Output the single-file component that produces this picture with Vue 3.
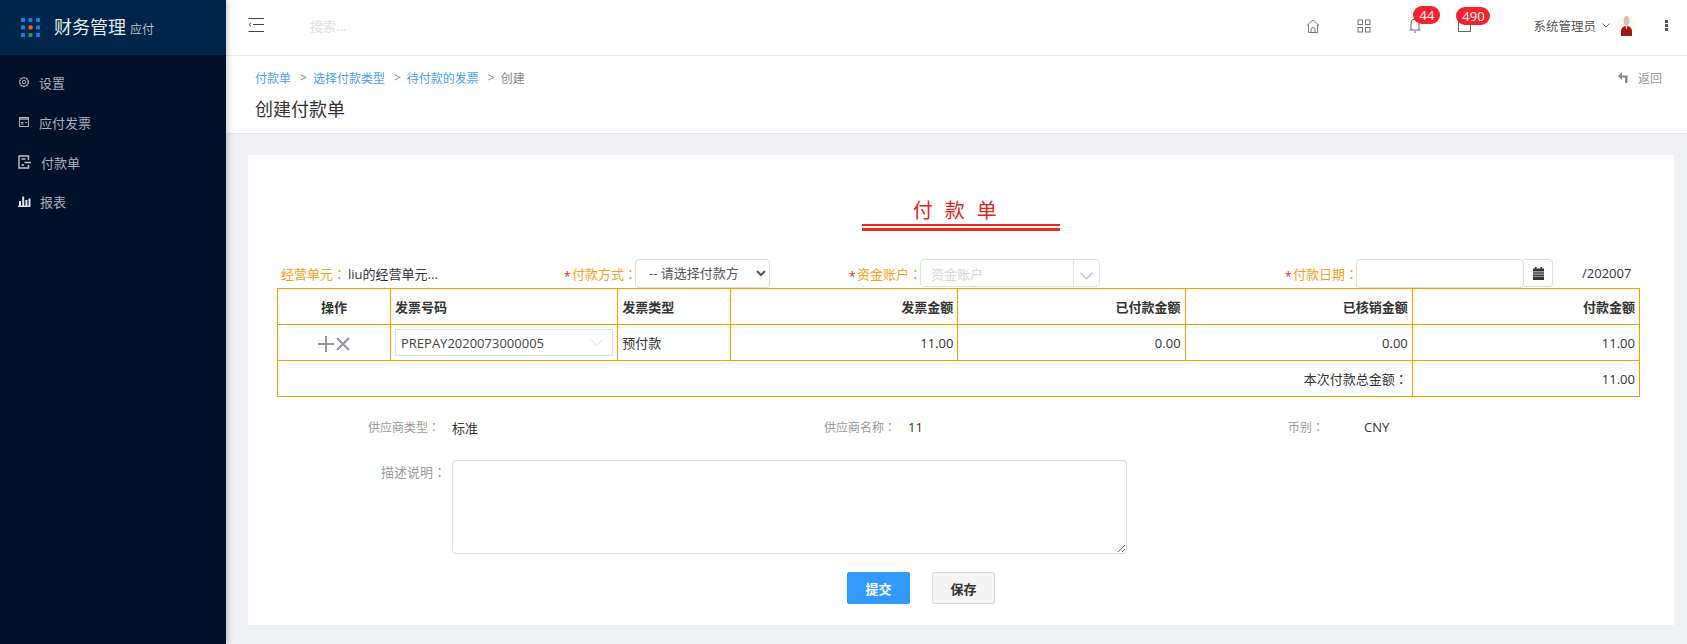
<template>
  <div class="app">
    <aside class="sidebar">
      <div class="logo">
        <svg class="logo-dots" width="19" height="19" viewBox="0 0 19 19">
          <rect v-for="d in dots" :key="d.k" :x="d.x" :y="d.y" width="4" height="4" rx="0.8" :fill="d.c" />
        </svg>
        <span class="logo-name">财务管理</span>
        <span class="logo-sub">应付</span>
      </div>
      <nav class="menu">
        <a class="menu-item">
          <svg class="menu-icon" width="12" height="12" viewBox="0 0 12 12" fill="none" stroke="#a9b0b9">
            <circle cx="6" cy="6" r="4.300" stroke-width="1.500" stroke-dasharray="2.200 .5" />
            <circle cx="6" cy="6" r="1.700" />
          </svg>
          设置
        </a>
        <a class="menu-item">
          <svg class="menu-icon" width="12" height="12" viewBox="0 0 12 12" fill="none" stroke="#a9b0b9">
            <rect x="1.500" y="1.500" width="9" height="9" />
            <path d="M1.500 3h9" stroke-width="1.500" />
            <path d="M3 6.500h2.500M7 6.500h2M3 8h2.500" />
          </svg>
          应付发票
        </a>
        <a class="menu-item pay">
          <svg class="menu-icon" width="13" height="14" viewBox="0 0 13 14" fill="none" stroke="#c0c5cc" stroke-width="1.400">
            <path d="M10.500 5V1H1v12h9.500v-3M3.500 4h4M3.500 10h2.500M6.500 7.500H13" />
          </svg>
          付款单
        </a>
        <a class="menu-item">
          <svg class="menu-icon" width="13" height="12" viewBox="0 0 13 12" fill="#dfe2e6">
            <path d="M0 10.500h12.500V12H0zM1 6h2v4.500H1zM4.200 1.500h2v9h-2zM7.400 5h2v5.500h-2zM10.500 3.500h2v7h-2z" />
          </svg>
          报表
        </a>
      </nav>
    </aside>

    <div class="main">
      <header class="navbar">
        <svg class="burger" width="16" height="14" viewBox="0 0 16 14" fill="none" stroke="#444">
          <path d="M.5.500H16M5 6.500h11M.5 13.500H16M3 4.800L1 6.500l2 1.700" />
        </svg>
        <span class="search">搜索...</span>
        <div class="nav-right">
          <svg class="nav-icon home" width="14" height="14" viewBox="0 0 14 14" fill="none" stroke="#777">
            <path d="M.8 6.500L7 1l6.200 5.500M2.500 5.500v8h9v-8M5 13.500v-3a2 2 0 0 1 4 0v3" />
          </svg>
          <svg class="nav-icon apps" width="14" height="14" viewBox="0 0 14 14" fill="none" stroke="#777">
            <rect x="1" y="1" width="4.500" height="4.500" />
            <rect x="8.500" y="1" width="4.500" height="4.500" />
            <rect x="1" y="8.500" width="4.500" height="4.500" />
            <rect x="8.500" y="8.500" width="4.500" height="4.500" />
          </svg>
          <div class="nav-badged bell">
            <svg width="12" height="15" viewBox="0 0 12 15" fill="none" stroke="#666">
              <path d="M.5 12h11M2 12V5a4 4 0 0 1 8 0v7M5 14h2" />
            </svg>
            <span class="badge">44</span>
          </div>
          <div class="nav-badged mail">
            <svg width="13" height="12" viewBox="0 0 13 12" fill="none" stroke="#666">
              <rect x=".5" y=".5" width="12" height="11" />
            </svg>
            <span class="badge">490</span>
          </div>
          <span class="username">系统管理员</span>
          <svg class="caret" width="8" height="5" viewBox="0 0 8 5" fill="none" stroke="#777">
            <path d="M.5.500L4 4 7.500.5" />
          </svg>
          <svg class="avatar" width="21" height="21" viewBox="0 0 21 21">
            <circle cx="10.500" cy="10.500" r="10.500" fill="#fdf9ee" />
            <ellipse cx="10.500" cy="6" rx="3" ry="5" fill="#dcc1b4" />
            <path d="M5 21v-4.500C5 13 7.500 11 10.500 11s5.500 2 5.500 5.500V21z" fill="#a01515" />
            <path d="M9.500 11h2l-1 4z" fill="#e8d6cc" />
          </svg>
          <span class="more"><i></i><i></i><i></i></span>
        </div>
      </header>

      <section class="page-head">
        <div class="crumbs">
          <a>付款单</a><span class="sep">&gt;</span>
          <a>选择付款类型</a><span class="sep">&gt;</span>
          <a>待付款的发票</a><span class="sep">&gt;</span>
          <span class="cur">创建</span>
          <span class="back">
            <svg width="10" height="11" viewBox="0 0 10 11" fill="#8c8c8c">
              <path d="M4 0L0 4l4 4V5.500h3V11h2.500V3.500H4z" />
            </svg>
            返回
          </span>
        </div>
        <h1 class="page-title">创建付款单</h1>
      </section>

      <section class="content">
        <div class="card">
          <div class="bill-title">
            <span class="bill-text">付 款 单</span>
            <span class="bill-rule"></span>
          </div>

          <div class="fields">
            <div class="field unit">
              <span class="lab">经营单元<span class="colon">：</span></span>
              <span class="unit-val">liu的经营单元...</span>
            </div>
            <div class="field">
              <i class="star">*</i><span class="lab">付款方式<span class="colon">：</span></span>
              <select class="pay-select">
                <option>-- 请选择付款方式 --</option>
              </select>
            </div>
            <div class="field">
              <i class="star">*</i><span class="lab">资金账户<span class="colon">：</span></span>
              <div class="combo">
                <span class="combo-text">资金账户</span>
                <span class="combo-arrow">
                  <svg width="13" height="8" viewBox="0 0 13 8" fill="none" stroke="#c4c4c4" stroke-width="1.300">
                    <path d="M.5.800l6 6 6-6" />
                  </svg>
                </span>
              </div>
            </div>
            <div class="field">
              <i class="star">*</i><span class="lab">付款日期<span class="colon">：</span></span>
              <div class="date-input"></div>
              <span class="date-btn">
                <svg width="11" height="13" viewBox="0 0 11 13" fill="#333">
                  <path d="M2 0h1.500v2H2zM7.500 0H9v2H7.500zM0 1.500h11V4.500H0zM0 5.200h11v1.500H0zM0 7.400h11v1.500H0zM0 9.600h11V13H0z" />
                </svg>
              </span>
            </div>
            <span class="period">/202007</span>
          </div>

          <table class="bill-table">
            <colgroup>
              <col class="c1" /><col class="c2" /><col class="c1" /><col class="c2" /><col class="c2" /><col class="c2" /><col class="c2" />
            </colgroup>
            <thead>
              <tr>
                <th class="center">操作</th>
                <th>发票号码</th>
                <th>发票类型</th>
                <th class="right">发票金额</th>
                <th class="right">已付款金额</th>
                <th class="right">已核销金额</th>
                <th class="right">付款金额</th>
              </tr>
            </thead>
            <tbody>
              <tr>
                <td class="center ops">
                  <svg width="16" height="16" viewBox="0 0 16 16" fill="#8f959b">
                    <path d="M7 0h2v7h7v2H9v7H7V9H0V7h7z" />
                  </svg>
                  <svg width="14" height="14" viewBox="0 0 14 14" fill="none" stroke="#8f959b" stroke-width="2">
                    <path d="M1 1l12 12M13 1L1 13" />
                  </svg>
                </td>
                <td class="invoice-cell">
                  <div class="invoice-box">
                    <span>PREPAY2020073000005</span>
                    <svg width="13" height="7" viewBox="0 0 13 7" fill="none" stroke="#dcdcdc">
                      <path d="M.5.500l6 6 6-6" />
                    </svg>
                  </div>
                </td>
                <td>预付款</td>
                <td class="right">11.00</td>
                <td class="right">0.00</td>
                <td class="right">0.00</td>
                <td class="right">11.00</td>
              </tr>
              <tr>
                <td colspan="6" class="right">本次付款总金额<span class="colon">：</span></td>
                <td class="right">11.00</td>
              </tr>
            </tbody>
          </table>

          <div class="supplier">
            <div class="sup-item first"><span class="sup-lab">供应商类型<span class="colon">：</span></span><span>标准</span></div>
            <div class="sup-item second"><span class="sup-lab">供应商名称<span class="colon">：</span></span><span>11</span></div>
            <div class="sup-item third"><span class="sup-lab">币别<span class="colon">：</span></span><span>CNY</span></div>
          </div>

          <div class="desc">
            <span class="desc-lab">描述说明<span class="colon">：</span></span>
            <textarea class="desc-input"></textarea>
          </div>

          <div class="actions">
            <button class="btn primary">提交</button>
            <button class="btn">保存</button>
          </div>
        </div>
      </section>
    </div>
  </div>
</template>

<script setup>
const colors = ['#0a84f0', '#0a84f0', '#0a84f0', '#0a84f0', '#f0640f', '#0a84f0', '#0a84f0', '#2f9a3a', '#0a84f0']
const dots = colors.map((c, i) => ({ k: i, c, x: (i % 3) * 7.5, y: Math.floor(i / 3) * 7.5 }))
</script>

<style>
html, body {
  margin: 0;
  overflow: hidden;
}
</style>

<style scoped>
.app {
  display: flex;
  width: 1687px;
  height: 644px;
  overflow: hidden;
  font-family: "Open Sans", "Noto Sans CJK SC", sans-serif;
  font-size: 13px;
  color: #333;
}

.colon {
  font-family: "Noto Sans CJK TC", sans-serif;
}

.sidebar {
  width: 226px;
  flex-shrink: 0;
  background: #001229;
  box-shadow: 2px 0 6px rgba(0, 0, 0, 0.2);
  z-index: 2;
}

.logo {
  height: 55px;
  background: #00254a;
  display: flex;
  align-items: center;
  padding-left: 21px;
  box-sizing: border-box;
  color: #e6e9ed;
}

.logo-name {
  font-size: 18px;
  margin-left: 14px;
  margin-top: -3px;
}

.logo-sub {
  font-size: 12px;
  margin-left: 4px;
  margin-top: 3px;
  color: #b9c0c9;
}

.menu {
  padding-top: 7px;
}

.menu-item {
  height: 40px;
  display: flex;
  align-items: center;
  padding-left: 18px;
  gap: 9px;
  color: #a9b0b9;
}

.menu-item:last-child {
  margin-top: -1px;
}

.menu-item.pay {
  gap: 10px;
}

.main {
  flex: 1;
  display: flex;
  flex-direction: column;
  min-width: 0;
  background: #f0f1f5;
}

.navbar {
  height: 56px;
  flex-shrink: 0;
  box-sizing: border-box;
  background: #fff;
  border-bottom: 1px solid #eee;
  display: flex;
  align-items: center;
  padding: 0 19px 0 22px;
}

.burger {
  margin-top: -6px;
}

.search {
  margin-left: 46px;
  color: #ddd;
  margin-top: -4px;
}

.nav-right {
  margin-left: auto;
  display: flex;
  align-items: center;
  margin-top: -4px;
}

.nav-icon.apps {
  margin-left: 37px;
}

.nav-badged {
  position: relative;
  display: flex;
}

.bell {
  margin-left: 38px;
}

.mail {
  margin-left: 37px;
}

.badge {
  position: absolute;
  height: 18px;
  line-height: 18px;
  border-radius: 9px;
  background: #f5222d;
  color: #fff;
  font-size: 13px;
  text-align: center;
}

.bell .badge {
  top: -12px;
  left: 4px;
  width: 27px;
}

.mail .badge {
  top: -13px;
  left: -2px;
  width: 34px;
}

.username {
  margin-left: 62px;
  font-size: 12.500px;
  color: #555;
}

.caret {
  margin-left: 6px;
}

.avatar {
  margin-left: 6px;
}

.more {
  margin-left: 28px;
  display: flex;
  flex-direction: column;
  gap: 1px;
}

.more i {
  width: 3px;
  height: 3px;
  background: #555;
  display: block;
}

.page-head {
  height: 78px;
  flex-shrink: 0;
  box-sizing: border-box;
  background: #fff;
  border-bottom: 1px solid #e6e6e6;
  padding: 13px 25px 0 29px;
}

.crumbs {
  display: flex;
  align-items: center;
  font-size: 12px;
  height: 17px;
  color: #888;
}

.crumbs a {
  color: #4b9cf5;
}

.sep {
  margin: 0 6px 0 9px;
  color: #888;
}

.cur {
  color: #888;
}

.back {
  margin-left: auto;
  display: flex;
  align-items: center;
  gap: 10px;
  color: #999;
}

.page-title {
  margin: 10px 0 0;
  font-size: 18px;
  font-weight: 400;
  line-height: 26px;
  color: #333;
}

.content {
  flex: 1;
  padding: 21px 13px 19px 22px;
  min-height: 0;
}

.card {
  background: #fff;
  height: 470px;
  box-sizing: border-box;
  padding: 0 35px 0 29px;
}

.bill-title {
  display: flex;
  flex-direction: column;
  align-items: center;
  height: 103px;
  box-sizing: border-box;
  padding: 44px 0 0 6px;
}

.bill-text {
  font-size: 20px;
  line-height: 25px;
  letter-spacing: 3.500px;
  padding-right: 9px;
  color: #e5231b;
  font-family: "Liberation Serif", "Noto Sans CJK SC", serif;
}

.bill-rule {
  width: 198px;
  height: 2px;
  box-sizing: content-box;
  border-top: 2px solid #f0281e;
  border-bottom: 3px solid #f0281e;
}

.fields {
  display: flex;
  align-items: center;
  height: 30px;
}

.field {
  display: flex;
  align-items: center;
  flex-shrink: 0;
}

.field:nth-child(1) {
  width: 287px;
  padding-left: 4px;
  box-sizing: border-box;
}

.field:nth-child(2) {
  width: 285px;
}

.field:nth-child(3) {
  width: 436px;
}

.field:nth-child(4) {
  width: 297px;
}

.lab {
  color: #f7a11a;
  white-space: nowrap;
  margin-right: -2px;
}

.unit .lab {
  margin-right: 0;
}

.unit-val {
  color: #333;
  margin-left: 2px;
}

.star {
  color: #e5231b;
  font-style: normal;
  font-size: 12px;
  width: 8px;
  margin-top: 6px;
}

.pay-select {
  width: 135px;
  height: 29px;
  box-sizing: border-box;
  border: 1px solid #ddd;
  border-radius: 4px;
  background: #fff;
  color: #555;
  font: inherit;
  padding: 0 14px 0 9px;
  position: relative;
}

.combo {
  width: 180px;
  height: 28px;
  box-sizing: border-box;
  border: 1px solid #e2e2e2;
  border-radius: 4px;
  display: flex;
  align-items: center;
  position: relative;
}

.combo-text {
  flex: 1;
  padding-left: 10px;
  color: #d8d8d8;
}

.combo-arrow {
  width: 26px;
  height: 100%;
  border-left: 1px solid #e2e2e2;
  display: flex;
  align-items: center;
  justify-content: center;
  padding-top: 6px;
  box-sizing: border-box;
}

.date-input {
  width: 168px;
  height: 29px;
  box-sizing: border-box;
  border: 1px solid #ddd;
  border-radius: 4px;
  position: relative;
}

.date-btn {
  width: 29px;
  height: 28px;
  box-sizing: border-box;
  border: 1px solid #ddd;
  border-left: 0;
  border-radius: 0 4px 4px 0;
  display: flex;
  align-items: center;
  justify-content: center;
}

.period {
  color: #333;
  flex-shrink: 0;
}

.bill-table {
  width: 1362px;
  table-layout: fixed;
  border-collapse: collapse;
}

.c1 {
  width: 113px;
}

.c2 {
  width: 227.200px;
}

.bill-table th,
.bill-table td {
  height: 36px;
  padding: 0 4px;
  box-sizing: border-box;
  border: 1px solid #f90;
  text-align: left;
  color: #333;
  font-size: 13px;
}

.bill-table th {
  font-weight: 600;
}

.bill-table .center {
  text-align: center;
}

.bill-table .right {
  text-align: right;
}

.ops svg {
  vertical-align: middle;
  margin: 0 1px;
}

.invoice-box {
  height: 27px;
  box-sizing: border-box;
  border: 1px solid #ddd;
  display: flex;
  align-items: center;
  justify-content: space-between;
  padding: 0 9px 0 5px;
  color: #444;
}

.supplier {
  display: flex;
  align-items: center;
  height: 20px;
  margin-top: 20px;
}

.sup-item {
  display: flex;
  align-items: center;
  color: #333;
}

.sup-lab {
  color: #999;
  font-size: 12px;
  margin-right: 12px;
}

.first {
  width: 456px;
  margin-left: 91px;
}

.second {
  width: 464px;
}

.third .sup-lab {
  margin-right: 40px;
}

.desc {
  display: flex;
  margin-top: 23px;
}

.desc-lab {
  width: 169px;
  margin-right: 6px;
  flex-shrink: 0;
  text-align: right;
  color: #999;
  padding-top: 2px;
}

.desc-input {
  width: 675px;
  height: 94px;
  box-sizing: border-box;
  border: 1px solid #ddd;
  border-radius: 4px;
  margin: 0;
  display: block;
}

.actions {
  display: flex;
  margin: 18px 0 0 570px;
  gap: 22px;
}

.btn {
  width: 63px;
  height: 32px;
  box-sizing: border-box;
  border: 1px solid #ddd;
  border-radius: 2px;
  background: #f4f4f4;
  color: #333;
  font: inherit;
  font-weight: 600;
}

.btn.primary {
  background: #3399ff;
  border-color: #3399ff;
  color: #fff;
}
</style>
